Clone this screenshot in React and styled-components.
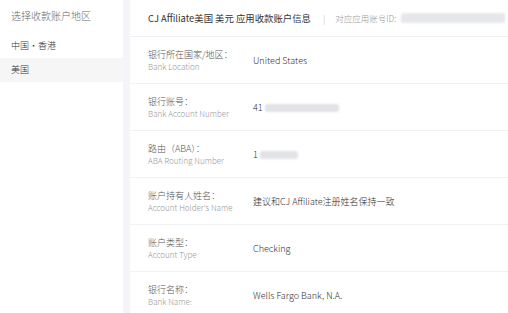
import styled, { createGlobalStyle } from "styled-components";

const Global = createGlobalStyle`
  html, body { margin: 0; padding: 0; background: #f3f5f9; }
  body { font-family: "Noto Sans CJK SC", "Noto Sans", sans-serif; font-weight: 300; }
`;

const Page = styled.div`
  display: flex;
  width: 508px;
  height: 313px;
  overflow: hidden;
  gap: 7px;
`;

const Sidebar = styled.div`
  width: 123px;
  flex-shrink: 0;
  background: #fff;
`;

const SideTitle = styled.div`
  padding: 8px 0 0 11px;
  height: 26px;
  font-size: 10px;
  color: #666;
  line-height: 16px;
`;

const SideItem = styled.div`
  height: 24px;
  line-height: 24px;
  padding-left: 11px;
  font-size: 9px;
  color: #333;
  background: ${(p) => (p.active ? "#f6f6f7" : "transparent")};
`;

const Main = styled.div`
  flex: 1;
  min-width: 0;
  background: #fff;
`;

const Header = styled.div`
  display: flex;
  align-items: center;
  height: 36px;
  padding-left: 18px;
  white-space: nowrap;
  border-bottom: 1px solid #eef0f3;
`;

const HeaderTitle = styled.span`
  font-size: 9.4px;
  font-weight: 400;
  color: #333;
`;

const Divider = styled.span`
  margin: 0 10px 0 12px;
  font-size: 9px;
  color: #bbb;
`;

const HeaderSub = styled.span`
  font-size: 8.5px;
  color: #999;
`;

const Blur = styled.span`
  display: inline-block;
  flex-shrink: 0;
  width: ${(p) => p.w}px;
  height: ${(p) => p.h || 8}px;
  margin-left: ${(p) => p.ml || 0}px;
  background: ${(p) => p.bg || "#e2e3e6"};
  border-radius: 2px;
  filter: blur(1.2px);
`;

const Row = styled.div`
  display: flex;
  align-items: center;
  height: 46px;
  padding-left: 18px;
  border-bottom: 1px solid #f1f2f4;
`;

const Label = styled.div`
  width: 105px;
  flex-shrink: 0;
  display: flex;
  flex-direction: column;
`;

const LabelCn = styled.span`
  font-size: 9px;
  color: #555;
  line-height: 13px;
`;

const LabelEn = styled.span`
  font-size: 8px;
  color: #999;
  line-height: 11px;
`;

const Value = styled.div`
  font-size: 9px;
  color: #2e2e2e;
  display: flex;
  align-items: center;
  white-space: nowrap;
  padding-top: 1px;
`;

const rows = [
  { cn: "银行所在国家/地区：", en: "Bank Location", value: "United States" },
  { cn: "银行账号：", en: "Bank Account Number", value: "41", blur: 74 },
  { cn: "路由（ABA）：", en: "ABA Routing Number", value: "1", blur: 38 },
  { cn: "账户持有人姓名：", en: "Account Holder's Name", value: "建议和CJ Affiliate注册姓名保持一致" },
  { cn: "账户类型：", en: "Account Type", value: "Checking" },
  { cn: "银行名称：", en: "Bank Name:", value: "Wells Fargo Bank, N.A." },
];

function App() {
  return (
    <Page>
      <Global />
      <Sidebar>
        <SideTitle>选择收款账户地区</SideTitle>
        <SideItem>中国·香港</SideItem>
        <SideItem active>美国</SideItem>
      </Sidebar>
      <Main>
        <Header>
          <HeaderTitle>CJ Affiliate美国 美元 应用收款账户信息</HeaderTitle>
          <Divider>|</Divider>
          <HeaderSub>对应应用账号ID:</HeaderSub>
          <Blur w={104} h={10} ml={5} bg="#e6e7ea" />
        </Header>
        {rows.map((r) => (
          <Row key={r.en}>
            <Label>
              <LabelCn>{r.cn}</LabelCn>
              <LabelEn>{r.en}</LabelEn>
            </Label>
            <Value>
              {r.value}
              {r.blur && <Blur w={r.blur} ml={2} />}
            </Value>
          </Row>
        ))}
      </Main>
    </Page>
  );
}

export default App;
